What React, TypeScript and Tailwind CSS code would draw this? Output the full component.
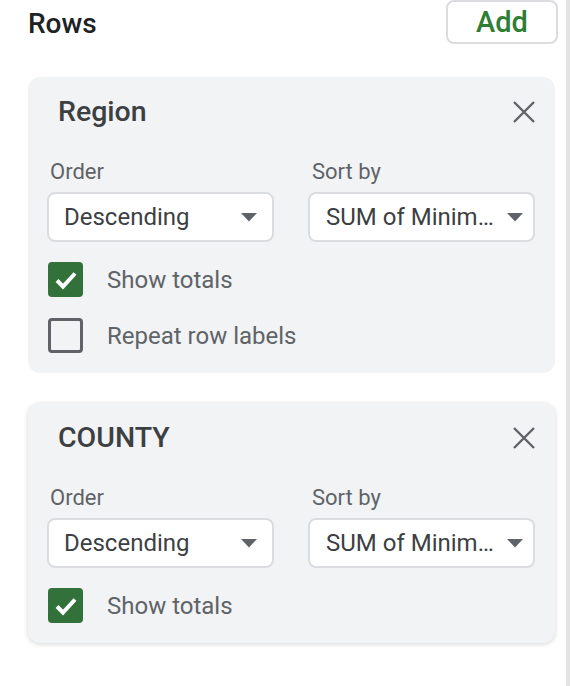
import React from "react";

function Caret() {
  return (
    <svg width="16" height="9" viewBox="0 0 16 9" className="shrink-0">
      <path d="M0 0 L16 0 L8 8.5 Z" fill="#5f6368" />
    </svg>
  );
}

function CloseIcon() {
  return (
    <svg width="24" height="24" viewBox="0 0 24 24">
      <path d="M2 2 L22 22 M22 2 L2 22" stroke="#5f6368" strokeWidth="2.4" strokeLinecap="butt" />
    </svg>
  );
}

function Checkbox({ checked }: { checked: boolean }) {
  if (checked) {
    return (
      <div className="w-[35px] h-[35px] rounded-[4px] bg-[#33713b] flex items-center justify-center shrink-0">
        <svg width="26" height="26" viewBox="0 0 26 26">
          <path d="M4 13.5 L10 19.5 L22 6.5" stroke="white" strokeWidth="4" fill="none" />
        </svg>
      </div>
    );
  }
  return <div className="w-[35px] h-[35px] rounded-[4px] border-[3px] border-[#5f6368] shrink-0" />;
}

function Select({ value, wide }: { value: string; wide?: boolean }) {
  return (
    <div
      className={
        "h-[50px] bg-white border-2 border-[#dadce0] rounded-[8px] flex items-center justify-between " +
        (wide ? "pl-[16px] pr-[10px]" : "pl-[15px] pr-[15px]")
      }
    >
      <span className="text-[24px] leading-[30px] text-[#3c4043] whitespace-nowrap">{value}</span>
      <Caret />
    </div>
  );
}

function FieldCard({
  title,
  repeat,
  shadow,
}: {
  title: string;
  repeat?: boolean;
  shadow?: boolean;
}) {
  return (
    <div
      className={
        "bg-[#f1f3f4] rounded-[12px] pl-[19px] pr-[20px] pt-[19px] pb-[20px] " +
        (shadow ? "shadow-[0_1px_5px_rgba(60,64,67,0.22)]" : "")
      }
    >
      <div className="flex items-center justify-between h-[32px]">
        <span className="ml-[11px] text-[28.5px] leading-[32px] font-medium text-[#3c4043]">{title}</span>
        <div className="mr-[-1px] h-[24px]">
          <CloseIcon />
        </div>
      </div>
      <div className="grid grid-cols-2 gap-x-[34px] mt-[32px]">
        <div className="flex flex-col">
          <span className="pl-[3px] h-[24px] leading-[24px] text-[22px] text-[#5f6368]">Order</span>
          <div className="mt-[8px]">
            <Select value="Descending" />
          </div>
        </div>
        <div className="flex flex-col">
          <span className="pl-[4px] h-[24px] leading-[24px] text-[22px] text-[#5f6368]">Sort by</span>
          <div className="mt-[8px]">
            <Select value="SUM of Minim…" wide />
          </div>
        </div>
      </div>
      <div className="flex flex-col gap-[21px] mt-[20px] pl-[1px]">
        <div className="flex items-center gap-[24px] h-[35px]">
          <Checkbox checked />
          <span className="text-[24px] leading-[30px] text-[#5f6368]">Show totals</span>
        </div>
        {repeat && (
          <div className="flex items-center gap-[24px] h-[35px]">
            <Checkbox checked={false} />
            <span className="text-[24px] leading-[30px] text-[#5f6368]">Repeat row labels</span>
          </div>
        )}
      </div>
    </div>
  );
}

export default function App() {
  return (
    <div
      className="w-[570px] h-[686px] bg-white flex overflow-hidden"
      style={{ fontFamily: "Roboto, 'Noto Sans', Arial, sans-serif" }}
    >
      <div className="w-[566px] pl-[28px] pr-[11px]">
        <div className="flex items-center justify-between h-[44px] mr-[-3px]">
          <span className="text-[28px] leading-[34px] font-medium text-[#202124] pt-[3px]">Rows</span>
          <div className="h-[44px] w-[112px] border-2 border-[#dadce0] rounded-[8px] flex items-center justify-center">
            <span className="text-[29px] leading-[34px] font-medium text-[#2e7d32]">Add</span>
          </div>
        </div>
        <div className="mt-[33px] flex flex-col gap-[30px]">
          <FieldCard title="Region" repeat />
          <FieldCard title="COUNTY" shadow />
        </div>
      </div>
      <div className="w-[4px] h-full bg-[#e3e3e3]" />
    </div>
  );
}
